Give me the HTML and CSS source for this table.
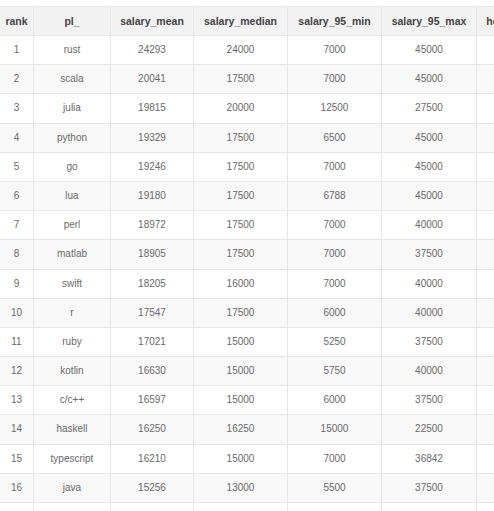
FILE: index.html
```html
<!DOCTYPE html>
<html>
<head>
<meta charset="utf-8">
<link rel="stylesheet" href="styles.css">
</head>
<body>
<div class="wrap">
<table class="grid">
<colgroup>
<col class="c-rank"><col class="c-pl"><col class="c-mean"><col class="c-median"><col class="c-min"><col class="c-max"><col class="c-extra">
</colgroup>
<thead>
<tr><th>rank</th><th>pl_</th><th>salary_mean</th><th>salary_median</th><th>salary_95_min</th><th>salary_95_max</th><th>homepage</th></tr>
</thead>
<tbody>
<tr><td>1</td><td>rust</td><td>24293</td><td>24000</td><td>7000</td><td>45000</td><td></td></tr>
<tr><td>2</td><td>scala</td><td>20041</td><td>17500</td><td>7000</td><td>45000</td><td></td></tr>
<tr><td>3</td><td>julia</td><td>19815</td><td>20000</td><td>12500</td><td>27500</td><td></td></tr>
<tr><td>4</td><td>python</td><td>19329</td><td>17500</td><td>6500</td><td>45000</td><td></td></tr>
<tr><td>5</td><td>go</td><td>19246</td><td>17500</td><td>7000</td><td>45000</td><td></td></tr>
<tr><td>6</td><td>lua</td><td>19180</td><td>17500</td><td>6788</td><td>45000</td><td></td></tr>
<tr><td>7</td><td>perl</td><td>18972</td><td>17500</td><td>7000</td><td>40000</td><td></td></tr>
<tr><td>8</td><td>matlab</td><td>18905</td><td>17500</td><td>7000</td><td>37500</td><td></td></tr>
<tr><td>9</td><td>swift</td><td>18205</td><td>16000</td><td>7000</td><td>40000</td><td></td></tr>
<tr><td>10</td><td>r</td><td>17547</td><td>17500</td><td>6000</td><td>40000</td><td></td></tr>
<tr><td>11</td><td>ruby</td><td>17021</td><td>15000</td><td>5250</td><td>37500</td><td></td></tr>
<tr><td>12</td><td>kotlin</td><td>16630</td><td>15000</td><td>5750</td><td>40000</td><td></td></tr>
<tr><td>13</td><td>c/c++</td><td>16597</td><td>15000</td><td>6000</td><td>37500</td><td></td></tr>
<tr><td>14</td><td>haskell</td><td>16250</td><td>16250</td><td>15000</td><td>22500</td><td></td></tr>
<tr><td>15</td><td>typescript</td><td>16210</td><td>15000</td><td>7000</td><td>36842</td><td></td></tr>
<tr><td>16</td><td>java</td><td>15256</td><td>13000</td><td>5500</td><td>37500</td><td></td></tr>
<tr><td></td><td></td><td></td><td></td><td></td><td></td><td></td></tr>
</tbody>
</table>
</div>
</body>
</html>
```
FILE: styles.css
```css
html, body {
  margin: 0;
  padding: 0;
  background: #ffffff;
  overflow: hidden;
}
.wrap {
  padding-top: 6px;
  width: 494px;
  height: 505px;
  overflow: hidden;
}
.grid {
  border-collapse: separate;
  border-spacing: 0;
  table-layout: fixed;
  width: 549px;
  border-top: 1px solid #e6e6e6;
  font-family: "Liberation Sans", Arial, sans-serif;
}
.c-rank { width: 34px; }
.c-pl { width: 77px; }
.c-mean { width: 83px; }
.c-median { width: 94px; }
.c-min { width: 94px; }
.c-max { width: 95px; }
.c-extra { width: 72px; }
.grid th, .grid td {
  padding: 0;
  text-align: center;
  white-space: nowrap;
  overflow: hidden;
  border-right: 1px solid #e6e6e6;
  border-bottom: 1px solid #e6e6e6;
}
.grid th {
  height: 28px;
  line-height: 28px;
  background: #f2f2f2;
  color: #444;
  font-size: 10.5px;
  font-weight: bold;
}
.grid td {
  height: 28.1875px;
  line-height: 28.1875px;
  color: #6a6a6a;
  font-size: 10px;
}
.grid tbody tr:nth-child(even) td {
  background: #f8f8f8;
}
```
